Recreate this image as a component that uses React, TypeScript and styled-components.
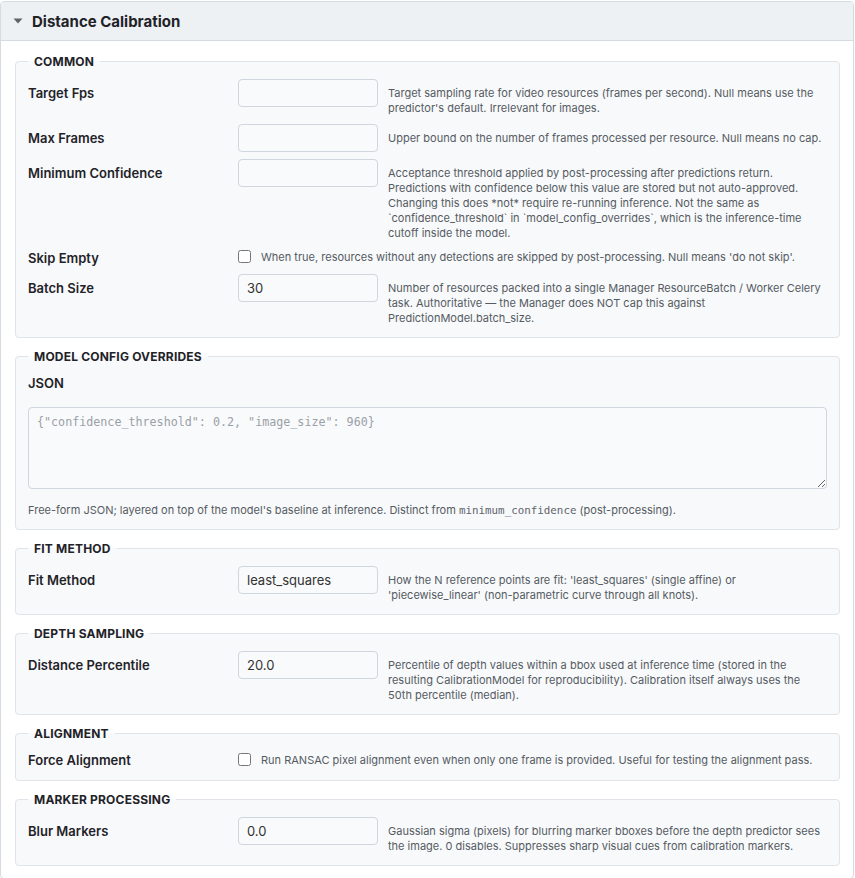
import React from "react";
import styled, { createGlobalStyle } from "styled-components";

const GlobalStyle = createGlobalStyle`
  html, body {
    margin: 0;
    padding: 0;
    background: #ffffff;
  }
  body {
    font-family: Inter, "Noto Sans", "Liberation Sans", sans-serif;
    color: #222;
  }
`;

// Panel shell
const Panel = styled.section`
  margin: 1px 1px 0 0;
  border: 1px solid #d5dbe1;
  border-radius: 4px;
  background: #ffffff;
  overflow: hidden;
`;

const PanelHeader = styled.div`
  display: flex;
  align-items: center;
  gap: 9px;
  height: 38px;
  padding: 0 12px;
  background: #eef1f4;
  border-bottom: 1px solid #d5dbe1;
`;

const Title = styled.h2`
  margin: 0;
  font-size: 15px;
  font-weight: 700;
  color: #1f2328;
`;

const PanelBody = styled.div`
  display: flex;
  flex-direction: column;
  gap: 11px;
  padding: 13px 13px 12px 14px;
`;

// Groups
const Group = styled.fieldset`
  margin: 0;
  padding: 10px 12px 11px;
  border: 1px solid #e0e4e9;
  border-radius: 4px;
  background: #f8f9fb;
  min-width: 0;
`;

const Legend = styled.legend`
  padding: 0 6px;
  font-size: 12px;
  font-weight: 700;
  letter-spacing: 0.2px;
  color: #1f2328;
  text-transform: uppercase;
`;

const Rows = styled.div`
  display: flex;
  flex-direction: column;
  gap: 7.5px;
`;

const Row = styled.div<{ $check?: boolean }>`
  display: grid;
  grid-template-columns: 200px 140px 1fr;
  column-gap: 10px;
  align-items: ${({ $check }) => ($check ? "center" : "start")};
  min-height: ${({ $check }) => ($check ? "18px" : "28px")};
`;

const Label = styled.label<{ $check?: boolean }>`
  padding-top: ${({ $check }) => ($check ? "0" : "6px")};
  font-size: 13px;
  font-weight: 600;
  line-height: 16px;
  color: #1f2328;
`;

const TextInput = styled.input`
  box-sizing: border-box;
  width: 140px;
  height: 28px;
  margin: 0;
  padding: 0 8px;
  border: 1px solid #cfd6dd;
  border-radius: 4px;
  background: #f9fafb;
  font-family: Inter, "Noto Sans", sans-serif;
  font-size: 13px;
  color: #333;
  outline: none;
`;

const Help = styled.div`
  padding-top: 7px;
  font-size: 11px;
  line-height: 15px;
  color: #555b62;
`;

const CheckCell = styled.div`
  grid-column: 2 / 4;
  display: flex;
  align-items: center;
  gap: 10px;
  font-size: 11px;
  line-height: 15px;
  color: #555b62;
`;

const Check = styled.input`
  width: 13px;
  height: 13px;
  margin: -2px 0 0;
  flex: none;
`;

const BlockLabel = styled.div`
  padding-top: 1px;
  font-size: 13px;
  font-weight: 600;
  line-height: 16px;
  color: #1f2328;
`;

const JsonArea = styled.textarea`
  box-sizing: border-box;
  display: block;
  width: 100%;
  height: 82px;
  margin-top: 16px;
  padding: 6px 8px;
  border: 1px solid #cfd6dd;
  border-radius: 4px;
  background: #f9fafb;
  font-family: "DejaVu Sans Mono", "Liberation Mono", monospace;
  font-size: 11.7px;
  line-height: 16px;
  color: #333;
  resize: vertical;
  outline: none;

  &::placeholder {
    color: #9aa0a6;
  }
`;

const BlockHelp = styled(Help)`
  padding-top: 14px;
`;

const Code = styled.code`
  font-family: "DejaVu Sans Mono", "Liberation Mono", monospace;
  font-size: 10.85px;
  font-weight: 400;
  color: #5f656c;
`;

const Caret = () => (
  <svg width="10" height="6" viewBox="0 0 10 6" aria-hidden="true">
    <path d="M0.5 0.5h9L5 5.5z" fill="#5f6368" />
  </svg>
);

type Field =
  | { kind: "text"; label: string; value?: string; help: string }
  | { kind: "check"; label: string; help: string };

type Section = { title: string; fields: Field[] };

const sections: Section[] = [
  {
    title: "Common",
    fields: [
      {
        kind: "text",
        label: "Target Fps",
        help: "Target sampling rate for video resources (frames per second). Null means use the predictor's default. Irrelevant for images.",
      },
      {
        kind: "text",
        label: "Max Frames",
        help: "Upper bound on the number of frames processed per resource. Null means no cap.",
      },
      {
        kind: "text",
        label: "Minimum Confidence",
        help: "Acceptance threshold applied by post-processing after predictions return. Predictions with confidence below this value are stored but not auto-approved. Changing this does *not* require re-running inference. Not the same as `confidence_threshold` in `model_config_overrides`, which is the inference-time cutoff inside the model.",
      },
      {
        kind: "check",
        label: "Skip Empty",
        help: "When true, resources without any detections are skipped by post-processing. Null means 'do not skip'.",
      },
      {
        kind: "text",
        label: "Batch Size",
        value: "30",
        help: "Number of resources packed into a single Manager ResourceBatch / Worker Celery task. Authoritative — the Manager does NOT cap this against PredictionModel.batch_size.",
      },
    ],
  },
];

const trailing: Section[] = [
  {
    title: "Fit Method",
    fields: [
      {
        kind: "text",
        label: "Fit Method",
        value: "least_squares",
        help: "How the N reference points are fit: 'least_squares' (single affine) or 'piecewise_linear' (non-parametric curve through all knots).",
      },
    ],
  },
  {
    title: "Depth Sampling",
    fields: [
      {
        kind: "text",
        label: "Distance Percentile",
        value: "20.0",
        help: "Percentile of depth values within a bbox used at inference time (stored in the resulting CalibrationModel for reproducibility). Calibration itself always uses the 50th percentile (median).",
      },
    ],
  },
  {
    title: "Alignment",
    fields: [
      {
        kind: "check",
        label: "Force Alignment",
        help: "Run RANSAC pixel alignment even when only one frame is provided. Useful for testing the alignment pass.",
      },
    ],
  },
  {
    title: "Marker Processing",
    fields: [
      {
        kind: "text",
        label: "Blur Markers",
        value: "0.0",
        help: "Gaussian sigma (pixels) for blurring marker bboxes before the depth predictor sees the image. 0 disables. Suppresses sharp visual cues from calibration markers.",
      },
    ],
  },
];

const FieldRow: React.FC<{ field: Field }> = ({ field }) =>
  field.kind === "check" ? (
    <Row $check>
      <Label $check>{field.label}</Label>
      <CheckCell>
        <Check type="checkbox" />
        <span>{field.help}</span>
      </CheckCell>
    </Row>
  ) : (
    <Row>
      <Label>{field.label}</Label>
      <TextInput type="text" defaultValue={field.value ?? ""} />
      <Help>{field.help}</Help>
    </Row>
  );

const SectionGroup: React.FC<{ section: Section }> = ({ section }) => (
  <Group>
    <Legend>{section.title}</Legend>
    <Rows>
      {section.fields.map((f) => (
        <FieldRow key={f.label} field={f} />
      ))}
    </Rows>
  </Group>
);

export default function App() {
  return (
    <>
      <GlobalStyle />
      <Panel>
        <PanelHeader>
          <Caret />
          <Title>Distance Calibration</Title>
        </PanelHeader>
        <PanelBody>
          {sections.map((s) => (
            <SectionGroup key={s.title} section={s} />
          ))}

          <Group>
            <Legend>Model Config Overrides</Legend>
            <BlockLabel>JSON</BlockLabel>
            <JsonArea placeholder='{"confidence_threshold": 0.2, "image_size": 960}' />
            <BlockHelp>
              Free-form JSON; layered on top of the model's baseline at
              inference. Distinct from <Code>minimum_confidence</Code>{" "}
              (post-processing).
            </BlockHelp>
          </Group>

          {trailing.map((s) => (
            <SectionGroup key={s.title} section={s} />
          ))}
        </PanelBody>
      </Panel>
    </>
  );
}
